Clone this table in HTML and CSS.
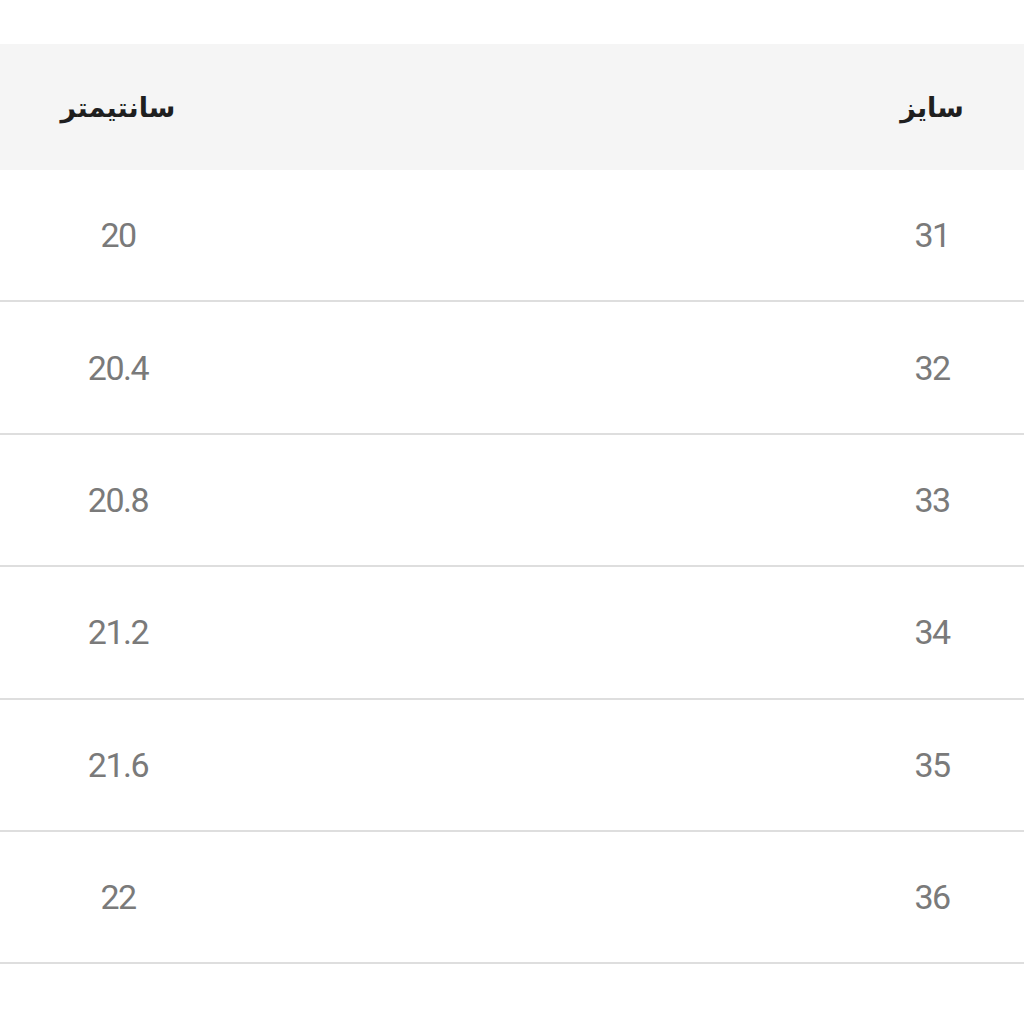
FILE: index.html
```
<!DOCTYPE html>
<html lang="fa">
<head>
<meta charset="utf-8">
<link rel="stylesheet" href="styles.css">
</head>
<body>
<div class="table">
  <div class="row head">
    <div class="cell size">سایز</div>
    <div class="cell gap"></div>
    <div class="cell cm">سانتیمتر</div>
  </div>
  <div class="row"><div class="cell size">31</div><div class="cell gap"></div><div class="cell cm">20</div></div>
  <div class="row"><div class="cell size">32</div><div class="cell gap"></div><div class="cell cm">20.4</div></div>
  <div class="row"><div class="cell size">33</div><div class="cell gap"></div><div class="cell cm">20.8</div></div>
  <div class="row"><div class="cell size">34</div><div class="cell gap"></div><div class="cell cm">21.2</div></div>
  <div class="row"><div class="cell size">35</div><div class="cell gap"></div><div class="cell cm">21.6</div></div>
  <div class="row"><div class="cell size">36</div><div class="cell gap"></div><div class="cell cm">22</div></div>
</div>
</body>
</html>
```

FILE: styles.css
```
html, body {
  margin: 0;
  padding: 0;
  background: #ffffff;
}
body {
  padding-top: 44px;
  font-family: Roboto, "DejaVu Sans", sans-serif;
}
.table {
  direction: rtl;
  width: 1024px;
}
.row {
  display: grid;
  grid-template-columns: 184px 1fr 236px;
  align-items: center;
  height: 132.4px;
  box-sizing: border-box;
  border-bottom: 2px solid #dedede;
  color: #7a7a7a;
  font-size: 34px;
  letter-spacing: -1.5px;
}
.row.head {
  height: 126px;
  background: #f5f5f5;
  border-bottom: none;
  color: #1f1f1f;
  font-family: "DejaVu Sans", sans-serif;
  font-weight: bold;
  font-size: 27px;
  letter-spacing: 0;
}
.cell {
  text-align: center;
}
```
